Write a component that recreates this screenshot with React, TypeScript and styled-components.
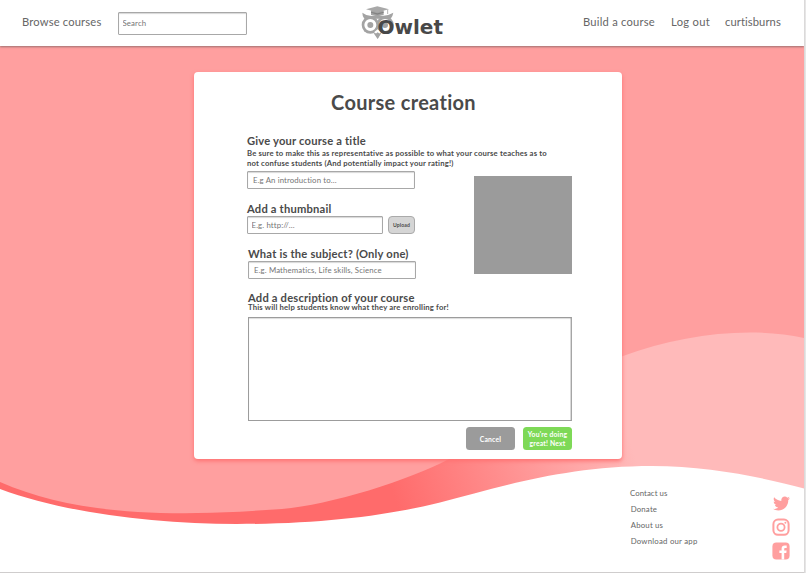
import React from "react";
import styled, { createGlobalStyle } from "styled-components";
import { FaTwitter } from "react-icons/fa";

const GlobalStyle = createGlobalStyle`
  * { box-sizing: border-box; }
  body { margin: 0; overflow: hidden; background: #fff; }
  button, input, textarea { font-family: inherit; }
`;

const ink = "#4a4a4a";

const Page = styled.div`
  position: relative;
  width: 806px;
  height: 573px;
  padding: 0 2px 1px 0;
  background: linear-gradient(to right, #d6d4d4, #ebebeb) right / 2px 100% no-repeat, #cfcdcd;
  font-family: Lato, "Open Sans", sans-serif;
  color: ${ink};
  overflow: hidden;
`;

const Screen = styled.div`
  position: relative;
  display: flex;
  flex-direction: column;
  width: 804px;
  height: 572px;
  background: #fff;
  overflow: hidden;
`;

const Waves = styled.svg`
  position: absolute;
  inset: 0;
`;

const Header = styled.header`
  position: relative;
  display: grid;
  grid-template-columns: 361px 1fr 221px;
  height: 46px;
  flex: none;
  background: #fff;
  box-shadow: 0 1px 2px rgba(90, 80, 80, 0.6);
`;

const NavLeft = styled.nav`
  display: flex;
  align-items: center;
  gap: 16px;
  padding-left: 22px;
`;

const NavRight = styled.nav`
  display: flex;
  align-items: center;
`;

const NavLink = styled.a<{ $width: number; $spacing: number }>`
  flex: none;
  width: ${(p) => p.$width}px;
  font-size: 11.2px;
  line-height: 14px;
  letter-spacing: ${(p) => p.$spacing}px;
  padding-bottom: 2px;
  color: #666;
  white-space: nowrap;
`;

const Field = styled.input<{ $width: number; $height?: number; $indent?: number }>`
  flex: none;
  width: ${(p) => p.$width}px;
  height: ${(p) => p.$height ?? 18}px;
  padding: 0 0 0 ${(p) => p.$indent ?? 5}px;
  border: 1px solid #a8a8a8;
  border-radius: 1px;
  background: #fff;
  box-shadow: inset 0 1px 1px rgba(0, 0, 0, 0.16);
  font-size: 7.8px;
  letter-spacing: 0.13px;
  outline: none;
  &::placeholder { color: #757575; opacity: 1; }
`;

const Brand = styled.a`
  display: flex;
  align-items: flex-start;
  padding-top: 6px;
`;

const BrandName = styled.span`
  position: relative;
  margin: 9px 0 0 -16.5px;
  font: 700 20px/24px "DejaVu Sans", sans-serif;
  color: #484848;
`;

const Card = styled.main`
  position: relative;
  display: flex;
  flex-direction: column;
  flex: none;
  width: 428px;
  height: 387px;
  margin: 26px 0 0 194px;
  padding: 18px 50px 9px 53px;
  border-radius: 4px;
  background: #fff;
  box-shadow: 0 2px 4px #ff7070;
`;

const Title = styled.h1`
  margin: 0 0 19.5px;
  padding-right: 12px;
  font-size: 20px;
  font-weight: 700;
  line-height: 24px;
  letter-spacing: 0.3px;
  text-align: center;
`;

const Label = styled.label<{ $shift?: number; $tight?: boolean }>`
  display: block;
  flex: none;
  height: ${(p) => (p.$tight ? 11.5 : 14)}px;
  padding-left: ${(p) => p.$shift ?? 0}px;
  font-size: 11.2px;
  font-weight: 700;
  line-height: 14px;
  letter-spacing: 0.19px;
  white-space: nowrap;
`;

const Hint = styled.p<{ $shift?: number }>`
  margin: 0;
  padding-left: ${(p) => p.$shift ?? 0}px;
  font-size: 7.7px;
  font-weight: 700;
  line-height: 10.5px;
  letter-spacing: 0.18px;
  white-space: nowrap;
`;

const Columns = styled.div`
  display: flex;
  flex: none;
  justify-content: space-between;
  height: 122px;
  padding-top: 2.5px;
`;

const Fields = styled.div`
  display: flex;
  flex-direction: column;
`;

const Group = styled.div<{ $shift?: number }>`
  display: flex;
  flex-direction: column;
  margin-top: 13px;
  margin-left: ${(p) => p.$shift ?? 0}px;
`;

const UploadRow = styled.div`
  display: flex;
  gap: 5px;
`;

const UploadButton = styled.button`
  width: 27px;
  height: 18px;
  padding: 0;
  border: 1px solid #aaa;
  border-radius: 4px;
  background: #d5d5d5;
  font-size: 5.1px;
  font-weight: 700;
  letter-spacing: 0.1px;
  color: ${ink};
`;

const Thumbnail = styled.div`
  width: 98px;
  height: 98px;
  margin-top: 5px;
  background: #9b9b9b;
`;

const Description = styled.textarea`
  display: block;
  flex: none;
  width: 324px;
  height: 104px;
  margin: 4px 0 0 1px;
  border: 1px solid #9c9c9c;
  border-right-color: #a6a6a6;
  background: #fff;
  box-shadow: inset 0 1px 1px rgba(0, 0, 0, 0.14), inset -1px 0 0 #dcdcdc;
  resize: none;
  outline: none;
`;

const Actions = styled.div`
  display: flex;
  justify-content: flex-end;
  gap: 8px;
  margin-top: auto;
`;

const Action = styled.button<{ $color: string }>`
  width: 49px;
  height: 23px;
  padding: 1px 0 0;
  border: 0;
  border-radius: 3.5px;
  background: ${(p) => p.$color};
  color: #fff;
  font-size: 6.8px;
  font-weight: 700;
  line-height: 9px;
  letter-spacing: 0.17px;
  white-space: pre-line;
`;

const Footer = styled.footer`
  position: relative;
  display: flex;
  justify-content: space-between;
  margin-top: 26px;
  padding: 0 14px 0 630px;
`;

const FooterLinks = styled.nav`
  display: flex;
  flex-direction: column;
`;

const FooterLink = styled.a<{ $spacing: number; $shift?: number }>`
  height: 16.1px;
  padding-left: ${(p) => p.$shift ?? 0}px;
  font-size: 7.8px;
  line-height: 16px;
  letter-spacing: ${(p) => p.$spacing}px;
  color: #666;
`;

const Social = styled.div`
  display: flex;
  flex-direction: column;
  align-items: center;
  width: 18px;
  padding-top: 9.5px;
  gap: 6px;
  color: #ff9f9f;
  svg { display: block; flex: none; }
`;

const Owl = () => (
  <svg width="33" height="33" viewBox="0 0 99 99">
    <path d="M4 20Q20 32 36 30H63Q80 30 97 20Q95 32 89 38H10Q4 32 4 20Z" fill="#a3a3a3" />
    <path d="M34 70H66L58 86L50 99L41 86Z" fill="#a3a3a3" />
    <circle cx="28" cy="57" r="26" fill="#a3a3a3" />
    <circle cx="72" cy="57" r="26" fill="#a3a3a3" />
    <circle cx="28" cy="57" r="13.5" fill="none" stroke="#fff" strokeWidth="9" />
    <circle cx="72" cy="57" r="13.5" fill="none" stroke="#fff" strokeWidth="9" />
    <circle cx="28" cy="57" r="6" fill="#a3a3a3" />
    <path d="M30 13H68V27Q49 34 30 27Z" fill="#a3a3a3" />
    <path d="M30 17L49 22L68 17V20L49 26L30 20Z" fill="#838383" />
    <path d="M15 10L49 1L84 10L49 19Z" fill="#a8a8a8" />
    <path d="M80 11V24" stroke="#b4b4b4" strokeWidth="3" />
    <path d="M39 79L50 70L61 79L50 86Z" fill="#fff" />
    <path d="M43 84L50 79L57 84L50 98Z" fill="#a3a3a3" />
  </svg>
);

const Instagram = () => (
  <svg width="18" height="18" viewBox="0 0 18 18" fill="none" stroke="currentColor">
    <rect x="1.4" y="1.6" width="15.2" height="15.2" rx="4.6" strokeWidth="2" />
    <circle cx="9" cy="9.2" r="3.6" strokeWidth="1.8" />
    <circle cx="13.4" cy="4.8" r="1" fill="currentColor" stroke="none" />
  </svg>
);

const Facebook = () => (
  <svg width="18" height="18" viewBox="0 0 18 18">
    <rect x="0.4" y="0.4" width="17.2" height="17.2" rx="4" fill="currentColor" />
    <path
      d="M9.6 17.6V11H7.4V8.4H9.6V6.6C9.6 4.5 10.8 3.5 12.7 3.5H14.7V5.9H13.4C12.5 5.9 12.2 6.3 12.2 7V8.4H14.6L14.3 11H12.2V17.6Z"
      fill="#fff"
    />
  </svg>
);

const Background = () => (
  <Waves width="804" height="572" viewBox="0 0 804 572">
    <defs>
      <linearGradient id="hill" gradientUnits="userSpaceOnUse" x1="395" y1="500" x2="625" y2="425">
        <stop offset="0" stopColor="#ff6b6b" />
        <stop offset="1" stopColor="#ffbaba" />
      </linearGradient>
    </defs>
    <path
      d="M0 40H804V488.5C765 478 710 466 652 466C565 466 500 487 440 502.5C385 516 320 524 237 524C155 524 65 513 0 489Z"
      fill="url(#hill)"
    />
    <path
      d="M0 40H804V338C750 326 682 334 623 356C560 380 500 430 449 459C410 480 330 505 282 509L240 511.8C130 517 60 508 0 482Z"
      fill="#ff9f9f"
    />
  </Waves>
);

export default function App() {
  return (
    <Page>
      <GlobalStyle />
      <Screen>
        <Background />
        <Header>
          <NavLeft>
            <NavLink $width={80} $spacing={0.17}>Browse courses</NavLink>
            <Field $width={129} $height={23} $indent={3.5} placeholder="Search" />
          </NavLeft>
          <Brand>
            <Owl />
            <BrandName>Owlet</BrandName>
          </Brand>
          <NavRight>
            <NavLink $width={88} $spacing={0.22}>Build a course</NavLink>
            <NavLink $width={54} $spacing={0.29}>Log out</NavLink>
            <NavLink $width={60} $spacing={0.09}>curtisburns</NavLink>
          </NavRight>
        </Header>
        <Card>
          <Title>Course creation</Title>
          <Label>Give your course a title</Label>
          <Hint>
            Be sure to make this as representative as possible to what your course teaches as to
            <br />
            not confuse students (And potentially impact your rating!)
          </Hint>
          <Columns>
            <Fields>
              <Field $width={167.5} placeholder="E.g An introduction to..." />
              <Group>
                <Label>Add a thumbnail</Label>
                <UploadRow>
                  <Field $width={136} $indent={3.5} placeholder="E.g. http://..." />
                  <UploadButton>Upload</UploadButton>
                </UploadRow>
              </Group>
              <Group $shift={1}>
                <Label>What is the subject? (Only one)</Label>
                <Field $width={167.5} placeholder="E.g. Mathematics, Life skills, Science" />
              </Group>
            </Fields>
            <Thumbnail />
          </Columns>
          <Label $shift={1} $tight>Add a description of your course</Label>
          <Hint $shift={1}>This will help students know what they are enrolling for!</Hint>
          <Description />
          <Actions>
            <Action $color="#9b9b9b">Cancel</Action>
            <Action $color="#7ed957">{"You're doing\ngreat! Next"}</Action>
          </Actions>
        </Card>
        <Footer>
          <FooterLinks>
            <FooterLink $spacing={0.07}>Contact us</FooterLink>
            <FooterLink $spacing={0.18} $shift={0.7}>Donate</FooterLink>
            <FooterLink $spacing={0.2} $shift={0.7}>About us</FooterLink>
            <FooterLink $spacing={0.22} $shift={0.7}>Download our app</FooterLink>
          </FooterLinks>
          <Social>
            <FaTwitter size={17} />
            <Instagram />
            <Facebook />
          </Social>
        </Footer>
      </Screen>
    </Page>
  );
}
